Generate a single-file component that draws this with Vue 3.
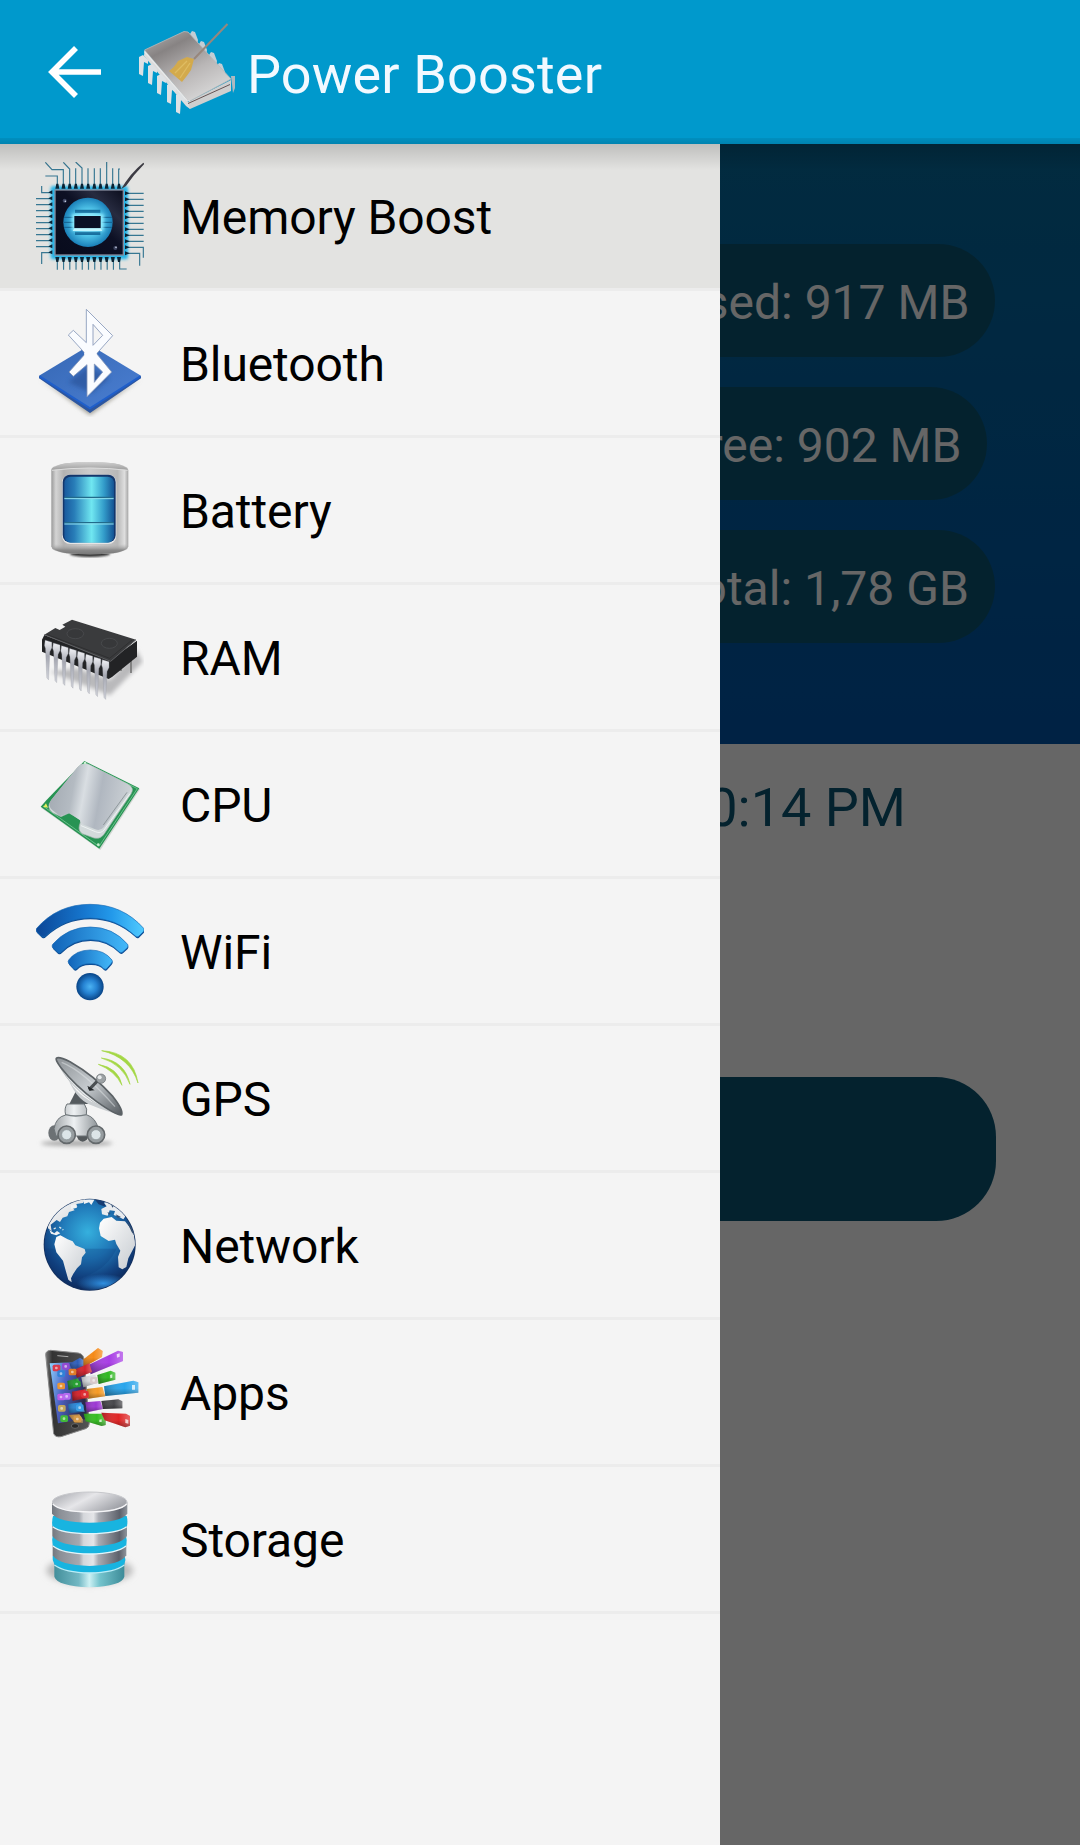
<template>
  <div class="screen">
    <header class="app-bar">
      <button class="back" aria-label="Back">
        <svg viewBox="0 0 54 54" fill="none" stroke="#fff" stroke-width="5.6">
          <path d="M53 27H4M28 3L4 27L28 51" />
        </svg>
      </button>
      <svg class="logo" viewBox="135 18 104 104">
        <defs>
          <linearGradient id="lgTop" x1="0.1" y1="0" x2="0.75" y2="1">
            <stop offset="0" stop-color="#b0aeae" />
            <stop offset="0.25" stop-color="#878383" />
            <stop offset="0.6" stop-color="#b9b6b6" />
            <stop offset="1" stop-color="#dcdcdc" />
          </linearGradient>
        </defs>
        <path v-for="(p, i) in logoBackPins" :key="'b' + i" :d="`M${p[0]} ${p[1]}l2 -3l3 1l3 8l-1 6l-5 -5z`" fill="#c3cdd4" />
        <path d="M144.500 50L190 104V109L186 106L144 56z" fill="#dcdcdc" />
        <path d="M188 102L231 80V91L190 109z" fill="#cfcfcf" />
        <path d="M188 103.500L230 84.500" stroke="#655" stroke-width="1" />
        <path v-for="(p, i) in logoPins" :key="'p' + i" :d="`M${p[0]} ${p[1]}l4 -2l5 5v4l-4 -2l-1 14l-4 -2z`" fill="#dde1e4" />
        <path d="M231 76l4 0v12l-2 5l-1 -9z" fill="#aeb9c0" />
        <path d="M144.500 50L184 31.500L188 32L231 79L190 101L187 100z" fill="url(#lgTop)" stroke="#b9b9b9" stroke-width="0.800" />
        <path d="M144.500 51.500L187 100.500L190 101" fill="none" stroke="#e9e9e9" stroke-width="1.200" />
        <path d="M227.500 24L194 59" stroke="#97877d" stroke-width="2" />
        <path d="M187 57L194 59L191 70Q187 76 182 82L169 71Q174 68 178 61z" fill="#d3aa4c" />
        <path d="M187 61L175 73M190 63L180 78" stroke="#dfbc62" stroke-width="1.300" />
      </svg>
      <h1 class="title">Power Booster</h1>
    </header>

    <div class="body">
      <main class="content">
        <section class="hero">
          <span v-for="stat in stats" :key="stat" class="pill">{{ stat }}</span>
        </section>
        <p class="last-boost">10:14 PM</p>
        <button class="boost" aria-label="Boost"></button>
      </main>
      <div class="scrim"></div>

      <nav class="drawer">
        <a
          v-for="(item, index) in items"
          :key="item.icon"
          class="row"
          :class="{ active: index === selected }"
          @click="selected = index"
        >
          <!-- Memory -->
          <svg v-if="item.icon === 'memory'" class="icon" viewBox="48 36 324 324">
            <defs>
              <radialGradient id="memOrb">
                <stop offset="0" stop-color="#c5f6ff" />
                <stop offset="0.55" stop-color="#4fc3e8" />
                <stop offset="1" stop-color="#1a7fb8" />
              </radialGradient>
              <linearGradient id="memDie" x1="0" y1="1" x2="1" y2="0">
                <stop offset="0" stop-color="#080b1c" />
                <stop offset="0.55" stop-color="#0d1024" />
                <stop offset="0.75" stop-color="#272b40" />
                <stop offset="1" stop-color="#0b0d1d" />
              </linearGradient>
              <filter id="memGlow" x="-20%" y="-20%" width="140%" height="140%">
                <feGaussianBlur stdDeviation="5" />
              </filter>
            </defs>
            <rect x="92" y="108" width="232" height="220" rx="8" fill="#27b5e8" filter="url(#memGlow)" />
            <path :d="memoryTraces" fill="none" stroke="#377792" stroke-width="3.500" />
            <path :d="memoryPads" fill="#0a2233" />
            <rect x="105" y="120" width="205" height="195" fill="url(#memDie)" stroke="#858a9c" stroke-width="4" />
            <circle cx="204" cy="217" r="74" fill="url(#memOrb)" />
            <path d="M132 202h34M132 217h34M132 232h34M242 202h34M242 217h34M242 232h34" stroke="#145f8e" stroke-width="3" />
            <path d="M165 179h76v10h-76zM165 245h76v10h-76z" fill="#176f9f" />
            <rect x="156" y="192" width="95" height="50" fill="#8cebff" filter="url(#memGlow)" />
            <rect x="163" y="198" width="79" height="37" fill="#0b1025" />
            <path d="M163 235h79l5 8h-89z" fill="#c1f6ff" />
            <circle cx="134" cy="152" r="6" fill="#3d4460" />
            <circle cx="286" cy="294" r="6" fill="#3d4460" />
            <circle cx="136" cy="154" r="2.500" fill="#cfd5e7" />
            <circle cx="288" cy="292" r="2.500" fill="#cfd5e7" />
            <path d="M303 118Q330 70 370 38L373 42Q341 74 318 108z" fill="#3c3b43" />
          </svg>

          <!-- Bluetooth -->
          <svg v-else-if="item.icon === 'bluetooth'" class="icon" viewBox="48 42 324 324">
            <defs>
              <linearGradient id="btPad" x1="0" y1="0" x2="1" y2="1">
                <stop offset="0" stop-color="#3567b4" />
                <stop offset="1" stop-color="#4b7fd2" />
              </linearGradient>
              <filter id="btBlur" x="-30%" y="-30%" width="160%" height="160%">
                <feGaussianBlur stdDeviation="6" />
              </filter>
            </defs>
            <path d="M60 251L210 360L362 251L210 340z" fill="#9c9a90" filter="url(#btBlur)" />
            <path d="M57 242L210 340L363 242V250L210 354L57 250z" fill="#2c56a0" />
            <path d="M57 242L210 150L363 242L210 340z" fill="url(#btPad)" />
            <path d="M59 244L210 340L361 244" fill="none" stroke="#1f5fcb" stroke-width="6" />
            <path d="M145 262L205 215L268 250L215 295z" fill="#274f94" opacity="0.6" filter="url(#btBlur)" />
            <path
              fill-rule="evenodd"
              d="M199 43L278 122L230 176L275 231L201 305V209L160 244L147 231L196 176L145 120L160 106L199 143zM219 88V151L248 121zM223 207V262L248 231z"
              fill="#fafcff"
              stroke="#8496b8"
              stroke-width="2.500"
            />
            <path d="M203 145L226 163L230 176L224 205L203 208L192 176z" fill="#fafcff" />
          </svg>

          <!-- Battery -->
          <svg v-else-if="item.icon === 'battery'" class="icon" viewBox="48 33 324 324">
            <defs>
              <linearGradient id="batShell">
                <stop offset="0" stop-color="#999" />
                <stop offset="0.06" stop-color="#d4d4d4" />
                <stop offset="0.16" stop-color="#b2b2b2" />
                <stop offset="0.5" stop-color="#ccc" />
                <stop offset="0.86" stop-color="#b8b8b8" />
                <stop offset="0.95" stop-color="#dedede" />
                <stop offset="1" stop-color="#a5a5a5" />
              </linearGradient>
              <linearGradient id="batFill">
                <stop offset="0" stop-color="#18599d" />
                <stop offset="0.2" stop-color="#287db8" />
                <stop offset="0.55" stop-color="#70e7f1" />
                <stop offset="0.8" stop-color="#329bc9" />
                <stop offset="1" stop-color="#145293" />
              </linearGradient>
              <linearGradient id="batCap" x1="0" y1="0" x2="0" y2="1">
                <stop offset="0" stop-color="#d0d0d0" />
                <stop offset="1" stop-color="#9d9d9d" />
              </linearGradient>
              <linearGradient id="batFoot" x1="0" y1="0" x2="0" y2="1">
                <stop offset="0" stop-color="#bbb" stop-opacity="0" />
                <stop offset="0.6" stop-color="#8a8a8a" />
                <stop offset="1" stop-color="#777" />
              </linearGradient>
              <filter id="batBlur"><feGaussianBlur stdDeviation="3" /></filter>
            </defs>
            <ellipse cx="210" cy="326" rx="60" ry="10" fill="#333" filter="url(#batBlur)" />
            <path d="M94 75Q95 61 140 55Q210 47 280 55Q324 61 325 75V304Q324 319 285 325Q210 331 135 325Q94 319 94 304z" fill="url(#batShell)" />
            <path d="M96 75Q100 61 140 55Q210 47 280 55Q320 61 323 75Q260 67 210 68Q150 67 96 75z" fill="url(#batCap)" />
            <path d="M96 76Q210 62 323 76" fill="none" stroke="#dcdcdc" stroke-width="3" />
            <path d="M95 296Q210 310 324 296V304Q321 319 280 325Q210 331 140 325Q98 319 95 304z" fill="url(#batFoot)" />
            <rect x="126" y="89" width="163" height="208" rx="24" fill="#e6e6e6" />
            <rect x="128" y="89" width="159" height="203" rx="22" fill="#13366b" />
            <rect x="133" y="95" width="149" height="198" rx="19" fill="url(#batFill)" />
            <path d="M133 157H281M133 233H281" stroke="#226b8b" stroke-width="4" />
            <path d="M133 161H281M133 237H281" stroke="#92e2f0" stroke-width="3" />
          </svg>

          <!-- RAM -->
          <svg v-else-if="item.icon === 'ram'" class="icon" viewBox="48 9 324 324">
            <defs>
              <linearGradient id="ramPin" x1="0" y1="0" x2="0" y2="1">
                <stop offset="0" stop-color="#f1f2f6" />
                <stop offset="0.4" stop-color="#a6a8b2" />
                <stop offset="1" stop-color="#d3d5dc" />
              </linearGradient>
              <filter id="ramBlur" x="-20%" y="-20%" width="140%" height="140%"><feGaussianBlur stdDeviation="6" /></filter>
            </defs>
            <path d="M90 215L170 205L270 240L350 150L368 185L270 286z" fill="#b9b9bb" filter="url(#ramBlur)" />
            <path d="M303 185v28M333 175v44" stroke="#777" stroke-width="5" />
            <path d="M73 105L66 119V155L266 237L276 231L351 170V122L270 180z" fill="#222325" />
            <path d="M73 104L106 84L119 90L136 80L127 74L156 59L348 119L272 184z" fill="#3a3b3d" />
            <path d="M73 104L272 184L348 119" fill="none" stroke="#5d5e61" stroke-width="3" />
            <path d="M80 103L269 175L336 120" fill="none" stroke="#28292b" stroke-width="2" />
            <ellipse cx="166" cy="101" rx="25" ry="15" fill="#37383a" stroke="#505154" stroke-width="2" />
            <ellipse cx="268" cy="130" rx="24" ry="15" fill="#37383a" stroke="#505154" stroke-width="2" />
            <path
              v-for="n in 8"
              :key="n"
              :d="`M${51 + n * 24.500} ${112 + n * 8.400}l20 6v17l-6 12l-4 84l-5 -6l-4 -88l-3 -9z`"
              fill="url(#ramPin)"
              stroke="#9697a0"
              stroke-width="1"
            />
          </svg>

          <!-- CPU -->
          <svg v-else-if="item.icon === 'cpu'" class="icon" viewBox="48 15 324 324">
            <defs>
              <linearGradient id="cpuLid" x1="0" y1="0.4" x2="1" y2="0.55">
                <stop offset="0" stop-color="#a4abb3" />
                <stop offset="0.28" stop-color="#b4bbc2" />
                <stop offset="0.42" stop-color="#d9dee2" />
                <stop offset="0.62" stop-color="#b0b7c0" />
                <stop offset="1" stop-color="#cdd2d6" />
              </linearGradient>
            </defs>
            <path d="M195 52L360 133L241 315L64 189L80 172z" fill="#aeb8b0" opacity="0.5" />
            <path d="M193 48L358 130L238 311L62 185L79 166z" fill="#279353" />
            <path d="M193 52L352 131L237 304L69 183" fill="none" stroke="#68c08a" stroke-width="3" />
            <path d="M174 66Q190 51 207 59L326 119Q344 129 333 147L251 269Q240 283 222 279L187 266Q174 258 178 242L183 225L147 204L123 215L98 203Q77 188 94 166z" fill="#d3dadb" stroke="#a4b5af" stroke-width="2" />
            <path d="M174 65Q190 51 207 59L321 116Q339 125 328 141L252 246Q241 259 226 253L191 239Q180 234 180 226L148 204L120 214L96 194Q82 181 94 164z" fill="url(#cpuLid)" />
            <path d="M321 142L250 240" fill="none" stroke="#8f999c" stroke-width="3" />
            <path d="M330 146L252 255Q242 267 226 260L183 242" fill="none" stroke="#eef2f3" stroke-width="3" />
            <path d="M70 186l8 -11l6 13z" fill="#e6ef5c" />
            <circle cx="235" cy="299" r="4" fill="#c6efce" />
            <circle cx="195" cy="54" r="4" fill="#c6efce" />
          </svg>

          <!-- WiFi -->
          <svg v-else-if="item.icon === 'wifi'" class="icon" viewBox="48 21 324 324">
            <defs>
              <linearGradient id="wfArc" x1="48" y1="0" x2="372" y2="0" gradientUnits="userSpaceOnUse">
                <stop offset="0" stop-color="#0b4696" />
                <stop offset="0.45" stop-color="#1677cf" />
                <stop offset="0.7" stop-color="#2399ea" />
                <stop offset="1" stop-color="#51cbff" />
              </linearGradient>
              <linearGradient id="wfSmall">
                <stop offset="0" stop-color="#1163b8" />
                <stop offset="1" stop-color="#43b9fa" />
              </linearGradient>
              <radialGradient id="wfDot" cx="0.5" cy="0.5">
                <stop offset="0" stop-color="#4bb2f2" />
                <stop offset="0.5" stop-color="#2582d2" />
                <stop offset="1" stop-color="#084487" />
              </radialGradient>
            </defs>
            <g fill="#0c4a91" transform="translate(1 4)">
              <path :d="wifiArcs[0]" /><path :d="wifiArcs[1]" /><path :d="wifiArcs[2]" />
            </g>
            <path :d="wifiArcs[0]" fill="url(#wfArc)" stroke="#1669b5" stroke-width="2" />
            <path :d="wifiArcs[1]" fill="url(#wfSmall)" stroke="#1669b5" stroke-width="2" />
            <path :d="wifiArcs[2]" fill="url(#wfSmall)" stroke="#1669b5" stroke-width="2" />
            <circle cx="210" cy="290" r="41" fill="url(#wfDot)" />
          </svg>

          <!-- GPS -->
          <svg v-else-if="item.icon === 'gps'" class="icon" viewBox="48 27 324 324">
            <defs>
              <linearGradient id="gpsDish" x1="0" y1="0" x2="1" y2="1">
                <stop offset="0" stop-color="#8d9296" />
                <stop offset="0.5" stop-color="#c5cace" />
                <stop offset="1" stop-color="#555b60" />
              </linearGradient>
              <linearGradient id="gpsBody" x1="0" y1="0" x2="1" y2="0">
                <stop offset="0" stop-color="#a0a5a8" />
                <stop offset="0.45" stop-color="#eef1f3" />
                <stop offset="1" stop-color="#8c9296" />
              </linearGradient>
              <filter id="gpsBlur" x="-30%" y="-100%" width="160%" height="300%"><feGaussianBlur stdDeviation="6" /></filter>
            </defs>
            <ellipse cx="170" cy="325" rx="108" ry="9" fill="#aaa" filter="url(#gpsBlur)" />
            <ellipse cx="103" cy="294" rx="18" ry="23" fill="#6c7174" />
            <ellipse cx="188" cy="299" rx="18" ry="21" fill="#54595c" />
            <path d="M168 168L206 207H148z" fill="#555b5f" />
            <path d="M110 70Q122 110 157 147Q217 213 302 239z" fill="#e6e9eb" stroke="#9ba1a4" stroke-width="2" />
            <path d="M135 105Q163 196 218 212Q255 228 302 239L225 205Q156 175 135 105z" fill="#c9cdd0" />
            <path d="M110 69Q117 64 150 80Q225 123 279 185Q310 224 305 239Q294 245 230 200Q164 151 123 98Q104 73 110 69z" fill="url(#gpsDish)" stroke="#5c6266" stroke-width="5" />
            <path d="M125 82Q190 107 285 215" fill="none" stroke="#e1e5e8" stroke-width="4" opacity="0.5" />
            <path d="M207 164L240 130" stroke="#4b5053" stroke-width="9" />
            <path d="M202 152l22 14l-16 1z" fill="#24282b" />
            <circle cx="243" cy="131" r="14" fill="#9ca1a4" stroke="#676d70" stroke-width="2" />
            <circle cx="239" cy="127" r="6" fill="#e7eaec" />
            <path d="M102 281Q108 246 137 240Q132 220 141 207H193Q204 222 199 239Q228 248 235 282V303H108z" fill="url(#gpsBody)" stroke="#6c7377" stroke-width="3" />
            <path d="M137 239Q166 247 200 239" fill="none" stroke="#777e82" stroke-width="4" />
            <g v-for="cx in [140, 228]" :key="cx">
              <circle :cx="cx" cy="299" r="26" fill="#979da0" stroke="#64696c" stroke-width="5" />
              <circle :cx="cx" cy="299" r="15" fill="#dce5e8" stroke="#8b9598" stroke-width="2" />
            </g>
            <path d="M245 47Q339 52 354 144Q330 67 245 47zM244 69Q315 78 330 148Q308 88 244 69zM235 88Q296 99 306 151Q285 108 235 88z" fill="#a3d744" stroke="#a3d744" stroke-width="2" />
          </svg>

          <!-- Network -->
          <svg v-else-if="item.icon === 'network'" class="icon" viewBox="48 18 324 324">
            <defs>
              <radialGradient id="netSea" cx="0.48" cy="0.36" r="0.65">
                <stop offset="0" stop-color="#35b0de" />
                <stop offset="0.45" stop-color="#2078b8" />
                <stop offset="0.78" stop-color="#12417f" />
                <stop offset="1" stop-color="#0c2758" />
              </radialGradient>
              <linearGradient id="netLand" x1="0" y1="0" x2="1" y2="1">
                <stop offset="0" stop-color="#fff" />
                <stop offset="1" stop-color="#c6cbd0" />
              </linearGradient>
              <radialGradient id="netShine">
                <stop offset="0" stop-color="#2f8fe0" />
                <stop offset="1" stop-color="#2f8fe0" stop-opacity="0" />
              </radialGradient>
              <clipPath id="netClip"><circle cx="209" cy="179" r="136" /></clipPath>
            </defs>
            <circle cx="209" cy="179" r="138" fill="#14305d" />
            <g clip-path="url(#netClip)">
              <circle cx="209" cy="179" r="136" fill="url(#netSea)" />
              <path d="M73 191H290Q249 277 130 287Q84 253 73 191z" fill="#0d3677" opacity="0.25" />
              <ellipse cx="250" cy="295" rx="80" ry="28" fill="url(#netShine)" />
              <path d="M84 130L95 139L92 119L110 105L120 111L128 98L142 94L147 81L164 76L157 68L172 65L169 57L189 54L196 41L160 44L111 75L84 118z" fill="url(#netLand)" />
              <path d="M190 43L192 57L207 52L214 60L224 43zM153 60L166 58L171 68L153 73zM88 135L103 145L111 138L121 145L109 151L93 146z" fill="#f0f2f4" />
              <path d="M224 43L262 47L252 53L258 66L236 58z" fill="#173c72" />
              <path d="M109 156L121 151L143 163L158 169L166 181L194 192L197 203L186 217L183 238L171 250L160 266L153 280L155 292L145 284L136 253L129 227L109 202L103 178z" fill="url(#netLand)" />
              <path d="M244 72L260 64L252 53L272 48L263 43L280 48L329 99L317 93L310 103L293 94L281 90L285 78L269 76L263 92L246 88z" fill="#e9ecef" />
              <path d="M251 101L275 96L289 107L315 109L340 141L347 178L325 220L319 246L307 253L296 247L294 216L301 197L289 177L285 164L266 168L242 153L237 130L240 113z" fill="url(#netLand)" />
              <path d="M319 107Q338 126 344 153L335 141zM287 88l16 8l-10 2zM273 57l9 5l-5 6zM262 82l10 2l-4 6z" fill="#344e70" />
              <path d="M118 126l12 9M101 132l8 -4" fill="none" stroke="#dce7ec" stroke-width="4" stroke-dasharray="7 5" />
            </g>
          </svg>

          <!-- Apps -->
          <svg v-else-if="item.icon === 'apps'" class="icon" viewBox="48 9 324 324">
            <defs>
              <linearGradient id="appPhone">
                <stop offset="0" stop-color="#777" />
                <stop offset="0.15" stop-color="#333" />
                <stop offset="1" stop-color="#555" />
              </linearGradient>
              <linearGradient id="appScreen" x1="0" y1="0" x2="1" y2="0.4">
                <stop offset="0" stop-color="#8fd6ff" />
                <stop offset="0.45" stop-color="#4c62c4" />
                <stop offset="1" stop-color="#2b2a4d" />
              </linearGradient>
              <linearGradient id="appShade">
                <stop offset="0" stop-color="#000" stop-opacity="0.25" />
                <stop offset="0.6" stop-color="#fff" stop-opacity="0" />
                <stop offset="1" stop-color="#fff" stop-opacity="0.3" />
              </linearGradient>
              <linearGradient id="appUnder" x1="0" y1="0" x2="0" y2="1">
                <stop offset="0.5" stop-color="#000" stop-opacity="0" />
                <stop offset="1" stop-color="#000" stop-opacity="0.3" />
              </linearGradient>
            </defs>
            <path d="M77 58Q78 47 92 46L175 54Q190 57 192 72L208 264Q208 278 197 281L123 305Q107 308 101 296z" fill="url(#appPhone)" stroke="#8a8a8a" stroke-width="3" />
            <path d="M89 85L188 80L201 252L114 265z" fill="url(#appScreen)" />
            <ellipse cx="165" cy="273" rx="11" ry="7" fill="#292929" stroke="#777" stroke-width="2" />
            <path d="M112 62l33 3" stroke="#aaa" stroke-width="3" />
            <g v-for="(bar, i) in appBars" :key="i">
              <path :d="bar.d" :fill="bar.color" />
              <path :d="bar.d" fill="url(#appShade)" />
              <path :d="bar.d" fill="url(#appUnder)" />
            </g>
            <g v-for="(t, i) in appTiles" :key="'t' + i">
              <rect :x="t[0]" :y="t[1]" width="23" height="20" rx="5" :fill="t[2]" />
              <rect :x="t[0] + 7" :y="t[1] + 6" width="8" height="8" rx="3" fill="#fff" opacity="0.55" />
            </g>
            <path d="M290 58l9 -3v10l-8 3zM270 120l7 -2v10l-6 2zM336 150l9 0v14l-9 0zM316 252l9 3v11l-9 -2zM238 254l7 -1v8h-7z" fill="#fff" opacity="0.75" />
          </svg>

          <!-- Storage -->
          <svg v-else class="icon" viewBox="48 15 324 324">
            <defs>
              <linearGradient id="stMetal">
                <stop offset="0" stop-color="#73777e" />
                <stop offset="0.1" stop-color="#8b8f96" />
                <stop offset="0.36" stop-color="#a5a9b0" />
                <stop offset="0.42" stop-color="#d5d7db" />
                <stop offset="0.55" stop-color="#e4e5e8" />
                <stop offset="0.62" stop-color="#a9acb3" />
                <stop offset="0.9" stop-color="#5d616b" />
                <stop offset="1" stop-color="#8f949b" />
              </linearGradient>
              <linearGradient id="stTop" x1="0" y1="0" x2="1" y2="0.5">
                <stop offset="0" stop-color="#a0a2a8" />
                <stop offset="0.5" stop-color="#e6e6e9" />
                <stop offset="1" stop-color="#a2a4aa" />
              </linearGradient>
              <linearGradient id="stBase">
                <stop offset="0" stop-color="#438f9b" />
                <stop offset="0.35" stop-color="#73b8c4" />
                <stop offset="0.5" stop-color="#cdf1f4" />
                <stop offset="0.65" stop-color="#73c3cc" />
                <stop offset="1" stop-color="#3d8b98" />
              </linearGradient>
              <filter id="stBlur" x="-20%" y="-40%" width="140%" height="180%"><feGaussianBlur stdDeviation="9" /></filter>
            </defs>
            <ellipse cx="209" cy="272" rx="130" ry="42" fill="#bbb" filter="url(#stBlur)" />
            <path d="M103 262V290Q112 318 209 322Q306 318 313 290V240Q209 290 103 240z" fill="url(#stBase)" />
            <path d="M98 228Q96 240 103 252Q130 277 209 278Q288 277 313 252Q319 240 314 228z" fill="#18b4e0" />
            <path d="M103 255Q135 278 209 279Q283 278 313 255" fill="none" stroke="#b9edf7" stroke-width="4" />
            <path d="M98 196V226Q118 256 209 258Q300 256 319 226V196z" fill="url(#stMetal)" />
            <path d="M98 168Q95 180 98 196Q125 221 209 222Q293 221 319 196Q322 180 318 168z" fill="#18b4e0" />
            <path d="M99 198Q127 221 209 222Q291 221 318 198" fill="none" stroke="#e2f6fb" stroke-width="4" />
            <path d="M97 138V168Q115 197 209 199Q303 197 321 168V138z" fill="url(#stMetal)" />
            <path d="M99 108Q95 122 97 138Q122 160 209 161Q296 160 321 138Q324 122 320 108z" fill="#18b4e0" />
            <path d="M98 140Q124 160 209 161Q294 160 320 140" fill="none" stroke="#e2f6fb" stroke-width="4" />
            <path d="M96 67V101Q115 126 209 128Q304 126 322 101V67z" fill="url(#stMetal)" />
            <ellipse cx="209" cy="66" rx="112" ry="30" fill="url(#stTop)" stroke="#c7c8cc" stroke-width="3" />
            <path d="M98 72Q120 95 209 96Q300 95 320 72" fill="none" stroke="#f5f5f7" stroke-width="4" />
          </svg>

          <span class="label">{{ item.label }}</span>
        </a>
      </nav>
      <div class="bar-shadow"></div>
    </div>
  </div>
</template>

<script setup>
import { ref } from 'vue'

const selected = ref(0)

const items = [
  { icon: 'memory', label: 'Memory Boost' },
  { icon: 'bluetooth', label: 'Bluetooth' },
  { icon: 'battery', label: 'Battery' },
  { icon: 'ram', label: 'RAM' },
  { icon: 'cpu', label: 'CPU' },
  { icon: 'wifi', label: 'WiFi' },
  { icon: 'gps', label: 'GPS' },
  { icon: 'network', label: 'Network' },
  { icon: 'apps', label: 'Apps' },
  { icon: 'storage', label: 'Storage' }
]

const stats = ['Used: 917 MB', 'Free: 902 MB', 'Total: 1,78 GB']

const logoPins = [[139, 57], [148, 66], [157, 76], [167, 85], [176, 95]]
const logoBackPins = [[190, 34], [199, 44], [209, 55], [217, 66]]

// Traces leaving the memory chip on its four sides
const steps = Array.from({ length: 11 }, (_, i) => i)
const topTraces = [
  'M112 110V78H76', 'M130 110V59H96L76 37', 'M149 110V57L130 37', 'M186 110V54L167 36',
  'M167 110V55', 'M204 110V55', 'M223 110V55', 'M241 110V55', 'M260 110V36', 'M278 110V55', 'M296 110V57H300'
]
const memoryTraces = [
  ...topTraces,
  ...steps.map((i) => `M${112 + i * 18.7} 325V${i === 10 ? '357H320' : 359}`),
  ...steps.map((i) => {
    const y = 128 + i * 18
    if (i === 0) return `M95 ${y}H65V108`
    if (i === 10) return `M95 ${y}H65V342`
    return `M95 ${y}H48`
  }),
  ...steps.map((i) => {
    const y = 130 + i * 18
    if (i === 9) return `M320 ${y}H370V323`
    if (i === 10) return `M320 ${y}H359V347`
    return `M320 ${y}H371`
  })
].join('')

const memoryPads = steps
  .map((i) => {
    const x = 112 + i * 18.5
    const y = 128 + i * 18
    return `M${x - 3} 101h6l3 15h-12zM${x - 6} 321h12l-3 15h-6zM85 ${y - 1}l12 -6v12zM329 ${y + 2}l-14 -6v12z`
  })
  .join('')

const wifiArcs = [
  'M50 115Q113 43 210 43Q307 43 371 115Q374 120 370 125L356 139Q351 143 346 138Q288 84 210 84Q133 84 76 138Q71 143 65 139L51 126Q46 120 50 115z',
  'M98 163Q143 111 211 111Q279 111 323 163Q326 168 322 173L308 186Q303 190 298 186Q262 149 211 149Q159 149 124 186Q119 191 113 187L99 174Q94 168 98 163z',
  'M146 210Q168 180 211 180Q253 180 276 210Q279 215 274 220L260 236Q256 240 251 236Q237 220 211 221Q184 220 170 236Q165 240 161 236L147 221Q142 215 146 210z'
]

// Coloured blocks flying out of the phone screen
const appBars = [
  { d: 'M179 82L234 39L248 48L246 66L192 96z', color: '#f58a18' },
  { d: 'M205 90L294 47L309 51V78L212 118z', color: '#a83ee5' },
  { d: 'M163 104L208 85L216 111L171 128z', color: '#d0222d' },
  { d: 'M148 86L180 68L190 75V92L156 103z', color: '#2e5eba' },
  { d: 'M184 127L226 119L234 143L190 157z', color: '#d9dce0' },
  { d: 'M232 120L272 107L286 113V134L236 147z', color: '#30b822' },
  { d: 'M142 138L174 130L182 153L146 165z', color: '#249331' },
  { d: 'M200 162L247 156L256 184L204 191z', color: '#f59a24' },
  { d: 'M252 154L340 137L355 142V173L256 183z', color: '#29a5ec' },
  { d: 'M156 170L196 163L207 188L158 197z', color: '#d61f28' },
  { d: 'M144 207L184 202L194 230L148 234z', color: '#2785d7' },
  { d: 'M196 202L241 198L249 222L201 232z', color: '#9c37d2' },
  { d: 'M244 198L295 193L307 199V220L249 222z', color: '#47474b' },
  { d: 'M191 236L245 236L257 247V270L245 273L197 259z', color: '#35bd21' },
  { d: 'M244 233L318 236L330 243V272L316 277L254 256z', color: '#df2626' },
  { d: 'M146 240L178 238L188 253V264L164 263z', color: '#c08a43' }
]
const appTiles = [
  [98, 89, '#d93a4c'], [126, 84, '#924bd2'], [112, 106, '#3181d7'], [146, 101, '#e07d28'],
  [112, 143, '#e99533'], [159, 137, '#29a035'], [112, 176, '#bd5be8'], [129, 174, '#b36bf0'],
  [183, 168, '#df2f35'], [114, 210, '#c2a75c'], [168, 208, '#3b9ee5'], [121, 241, '#43b93a'],
  [161, 242, '#d69a49'], [210, 126, '#d8c9cc']
]
</script>

<style>
body {
  margin: 0;
}
</style>

<style scoped>
.screen {
  width: 1080px;
  height: 1845px;
  display: flex;
  flex-direction: column;
  overflow: hidden;
  font-family: Roboto, sans-serif;
}

button {
  border: none;
  padding: 0;
  font: inherit;
}

.app-bar {
  flex: none;
  box-sizing: border-box;
  height: 144px;
  padding-left: 48px;
  display: flex;
  align-items: center;
  background: linear-gradient(#0099cc 0 138px, #008fbf 138px, #0083b0 144px);
}

.back {
  width: 54px;
  height: 54px;
  background: none;
}

.back svg {
  display: block;
}

.logo {
  width: 104px;
  height: 104px;
  margin: 0 0 4px 33px;
}

.title {
  margin: 6px 0 0 8px;
  font-size: 54px;
  font-weight: 400;
  line-height: 64px;
  letter-spacing: 0.15px;
  color: #f2f9ff;
}

.body {
  position: relative;
  flex: 1;
  background: #fff;
}

.content {
  height: 100%;
  display: flex;
  flex-direction: column;
}

.hero {
  box-sizing: border-box;
  height: 600px;
  padding: 100px 0 0 562px;
  display: flex;
  flex-direction: column;
  align-items: center;
  gap: 30px;
  background: linear-gradient(#056c9f, #0055ab);
}

.pill {
  height: 113px;
  padding: 0 26px;
  border-radius: 57px;
  line-height: 117px;
  font-size: 48px;
  white-space: nowrap;
  color: #fff;
  background: #0b5674;
}

.last-boost {
  margin: 32px 174px 0 0;
  text-align: right;
  font-size: 54px;
  line-height: 64px;
  color: #0b5674;
}

.boost {
  height: 144px;
  margin: 237px 84px 0;
  border-radius: 60px;
  background: #0b5674;
}

.scrim {
  position: absolute;
  inset: 0;
  background: rgba(0, 0, 0, 0.6);
}

.drawer {
  position: absolute;
  top: 0;
  left: 0;
  bottom: 0;
  width: 720px;
  background: #f4f4f4;
}

.row {
  display: flex;
  align-items: center;
  height: 144px;
  padding-left: 36px;
  gap: 36px;
  border-bottom: 3px solid #ececec;
}

.row.active {
  background: #e3e3e1;
}

.icon {
  width: 108px;
  height: 108px;
}

.label {
  padding-top: 4px;
  font-size: 48px;
  line-height: 56px;
  letter-spacing: -0.1px;
  color: #000;
}

/* Shadow cast by the app bar */
.bar-shadow {
  position: absolute;
  top: 0;
  left: 0;
  right: 0;
  height: 26px;
  background: linear-gradient(rgba(0, 0, 0, 0.16), rgba(0, 0, 0, 0));
}
</style>
